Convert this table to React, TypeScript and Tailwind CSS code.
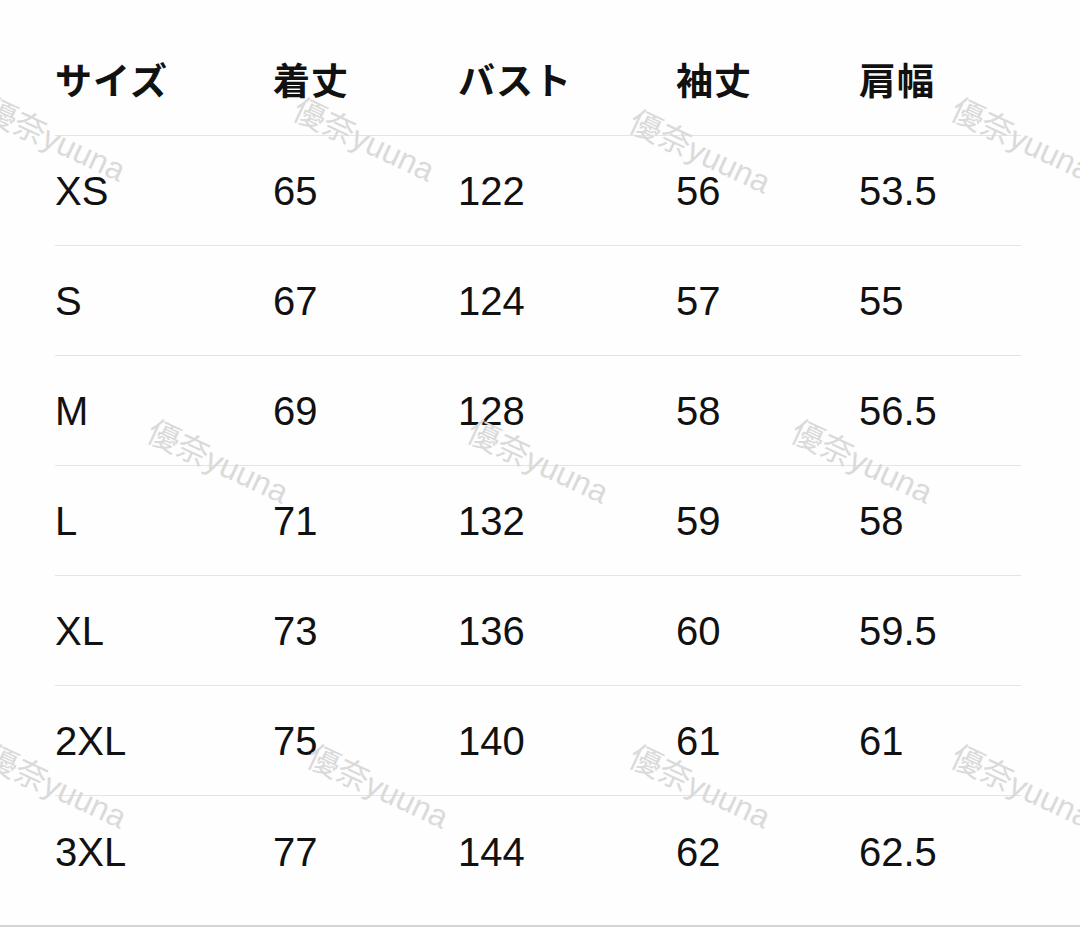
const headers = ['サイズ', '着丈', 'バスト', '袖丈', '肩幅'];

const rows = [
  ['XS', '65', '122', '56', '53.5'],
  ['S', '67', '124', '57', '55'],
  ['M', '69', '128', '58', '56.5'],
  ['L', '71', '132', '59', '58'],
  ['XL', '73', '136', '60', '59.5'],
  ['2XL', '75', '140', '61', '61'],
  ['3XL', '77', '144', '62', '62.5'],
];

// watermark centres, as they sit over the table
const marks = [
  { x: 55, y: 140 },
  { x: 364, y: 140 },
  { x: 700, y: 152 },
  { x: 1022, y: 140 },
  { x: 218, y: 462 },
  { x: 538, y: 462 },
  { x: 862, y: 462 },
  { x: 56, y: 787 },
  { x: 378, y: 787 },
  { x: 700, y: 787 },
  { x: 1022, y: 787 },
];

const font = { fontFamily: '"Liberation Sans", "Noto Sans CJK JP", sans-serif' };

const App = () => {
  return (
    <div className="relative w-[1080px] h-[927px] overflow-hidden bg-[#fefefe] text-[#111]" style={font}>
      <div className="pt-[25px] pl-[55px] pr-[59px]">
        <div className="grid grid-cols-[218px_185px_218px_183px_1fr] h-[111px] items-center border-b border-[#e4e4e4]">
          {headers.map((h) => (
            <div key={h} className="text-[37px] font-bold leading-none tracking-[1px] pt-[4px]">
              {h}
            </div>
          ))}
        </div>
        {rows.map((row, i) => (
          <div
            key={row[0]}
            className={`grid grid-cols-[218px_185px_218px_183px_1fr] h-[110px] items-center ${
              i < rows.length - 1 ? 'border-b border-[#e4e4e4]' : ''
            }`}
          >
            {row.map((cell, j) => (
              <div key={j} className="text-[40px] leading-none pt-[1px]">
                {cell}
              </div>
            ))}
          </div>
        ))}
      </div>

      <div className="absolute left-0 right-0 bottom-0 h-[2px] bg-[#d4d4d4]" />

      {marks.map((m, i) => (
        <div
          key={i}
          className="absolute whitespace-nowrap text-[32px] leading-none text-[#dadada] rotate-[25deg] -translate-x-1/2 -translate-y-1/2 pointer-events-none"
          style={{ left: m.x, top: m.y }}
        >
          優奈yuuna
        </div>
      ))}
    </div>
  );
};

export default App;
